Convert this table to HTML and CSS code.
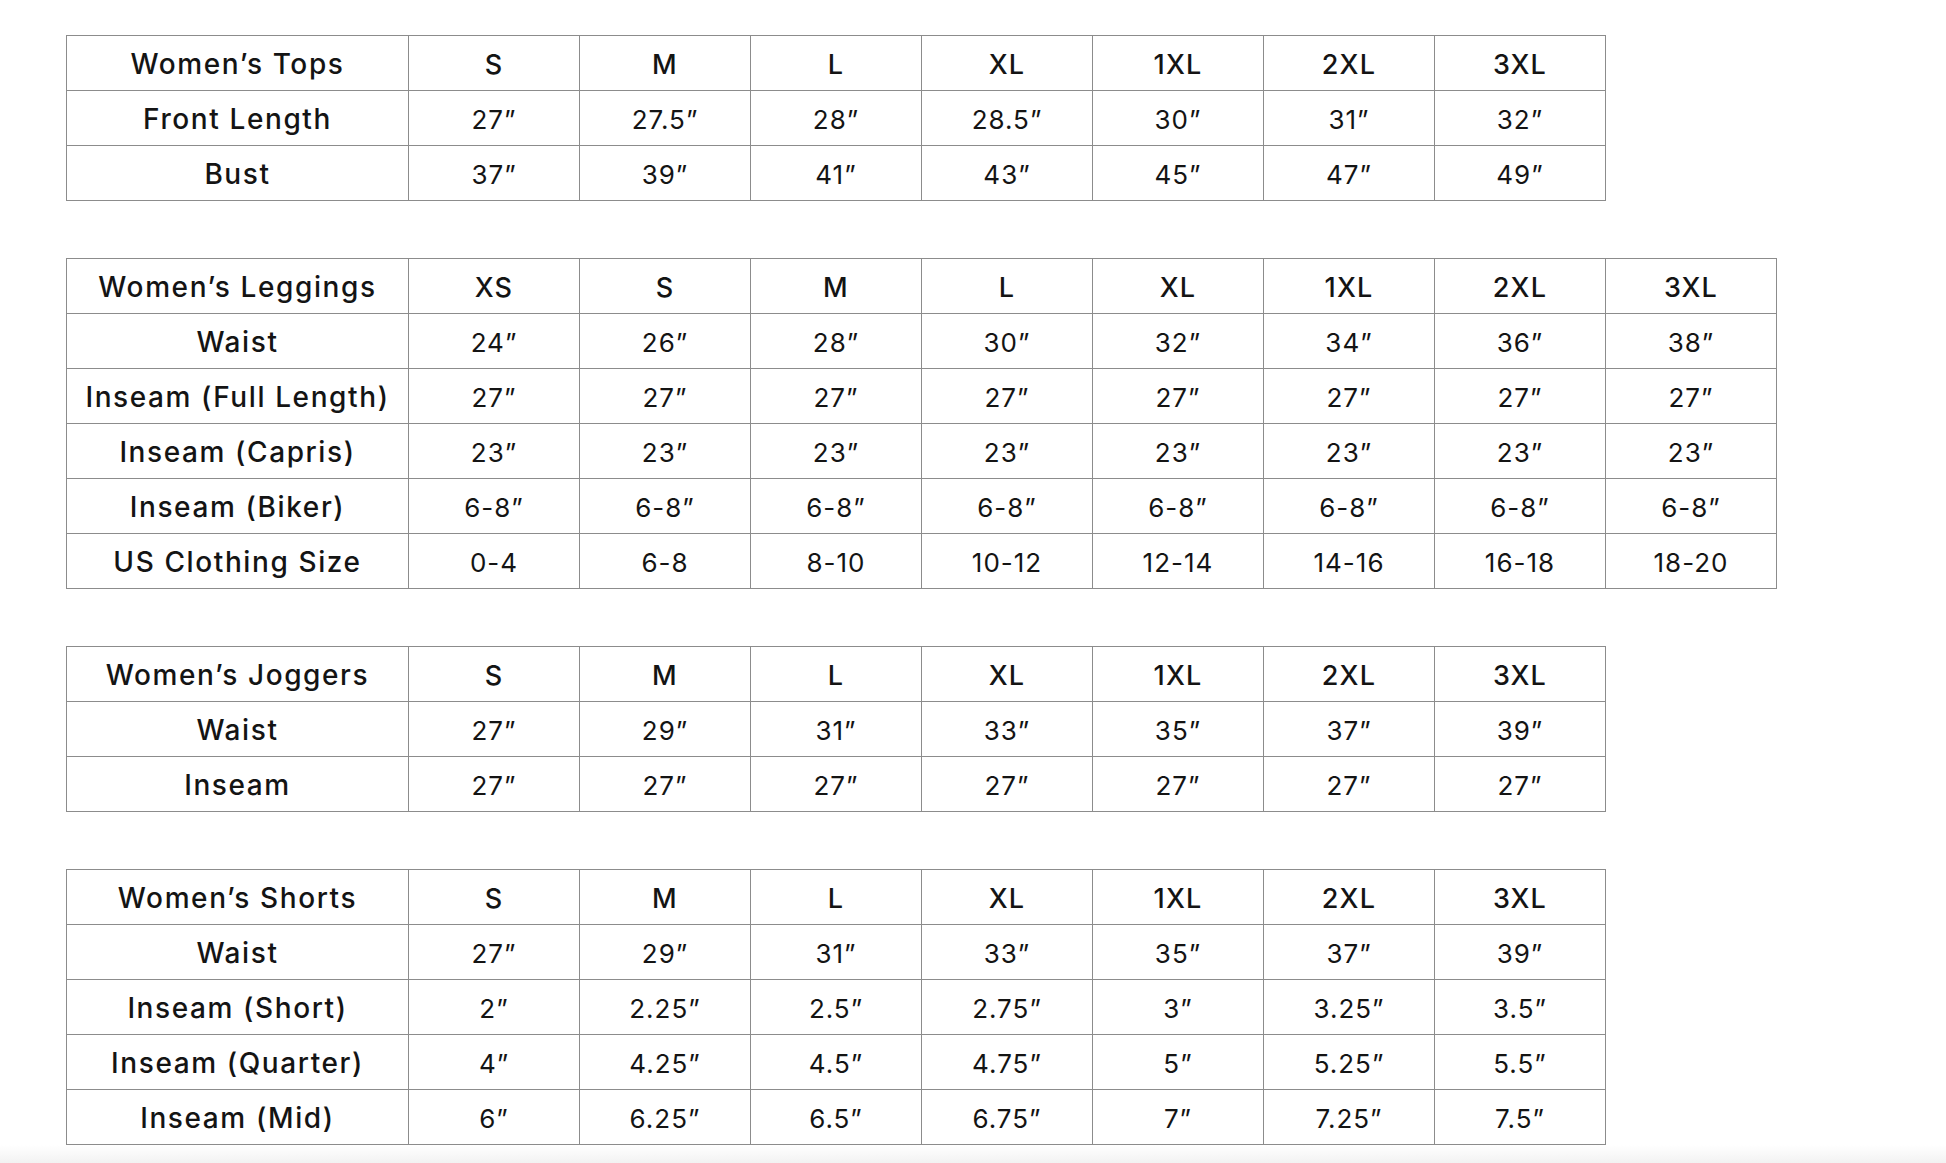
FILE: index.html
```html
<!DOCTYPE html>
<html lang="en">
<head>
<meta charset="utf-8">
<title>Women's Size Charts</title>
<link rel="stylesheet" href="styles.css">
</head>
<body>
<main class="page">
  <table class="chart">
    <colgroup><col class="c-label"><col class="c-size"><col class="c-size"><col class="c-size"><col class="c-size"><col class="c-size"><col class="c-size"><col class="c-size"></colgroup>
    <tr class="head"><th>Women&rsquo;s Tops</th><th>S</th><th>M</th><th>L</th><th>XL</th><th>1XL</th><th>2XL</th><th>3XL</th></tr>
    <tr><th>Front Length</th><td>27&rdquo;</td><td>27.5&rdquo;</td><td>28&rdquo;</td><td>28.5&rdquo;</td><td>30&rdquo;</td><td>31&rdquo;</td><td>32&rdquo;</td></tr>
    <tr><th>Bust</th><td>37&rdquo;</td><td>39&rdquo;</td><td>41&rdquo;</td><td>43&rdquo;</td><td>45&rdquo;</td><td>47&rdquo;</td><td>49&rdquo;</td></tr>
  </table>

  <table class="chart">
    <colgroup><col class="c-label"><col class="c-size"><col class="c-size"><col class="c-size"><col class="c-size"><col class="c-size"><col class="c-size"><col class="c-size"><col class="c-size"></colgroup>
    <tr class="head"><th>Women&rsquo;s Leggings</th><th>XS</th><th>S</th><th>M</th><th>L</th><th>XL</th><th>1XL</th><th>2XL</th><th>3XL</th></tr>
    <tr><th>Waist</th><td>24&rdquo;</td><td>26&rdquo;</td><td>28&rdquo;</td><td>30&rdquo;</td><td>32&rdquo;</td><td>34&rdquo;</td><td>36&rdquo;</td><td>38&rdquo;</td></tr>
    <tr><th>Inseam (Full Length)</th><td>27&rdquo;</td><td>27&rdquo;</td><td>27&rdquo;</td><td>27&rdquo;</td><td>27&rdquo;</td><td>27&rdquo;</td><td>27&rdquo;</td><td>27&rdquo;</td></tr>
    <tr><th>Inseam (Capris)</th><td>23&rdquo;</td><td>23&rdquo;</td><td>23&rdquo;</td><td>23&rdquo;</td><td>23&rdquo;</td><td>23&rdquo;</td><td>23&rdquo;</td><td>23&rdquo;</td></tr>
    <tr><th>Inseam (Biker)</th><td>6-8&rdquo;</td><td>6-8&rdquo;</td><td>6-8&rdquo;</td><td>6-8&rdquo;</td><td>6-8&rdquo;</td><td>6-8&rdquo;</td><td>6-8&rdquo;</td><td>6-8&rdquo;</td></tr>
    <tr><th>US Clothing Size</th><td>0-4</td><td>6-8</td><td>8-10</td><td>10-12</td><td>12-14</td><td>14-16</td><td>16-18</td><td>18-20</td></tr>
  </table>

  <table class="chart">
    <colgroup><col class="c-label"><col class="c-size"><col class="c-size"><col class="c-size"><col class="c-size"><col class="c-size"><col class="c-size"><col class="c-size"></colgroup>
    <tr class="head"><th>Women&rsquo;s Joggers</th><th>S</th><th>M</th><th>L</th><th>XL</th><th>1XL</th><th>2XL</th><th>3XL</th></tr>
    <tr><th>Waist</th><td>27&rdquo;</td><td>29&rdquo;</td><td>31&rdquo;</td><td>33&rdquo;</td><td>35&rdquo;</td><td>37&rdquo;</td><td>39&rdquo;</td></tr>
    <tr><th>Inseam</th><td>27&rdquo;</td><td>27&rdquo;</td><td>27&rdquo;</td><td>27&rdquo;</td><td>27&rdquo;</td><td>27&rdquo;</td><td>27&rdquo;</td></tr>
  </table>

  <table class="chart">
    <colgroup><col class="c-label"><col class="c-size"><col class="c-size"><col class="c-size"><col class="c-size"><col class="c-size"><col class="c-size"><col class="c-size"></colgroup>
    <tr class="head"><th>Women&rsquo;s Shorts</th><th>S</th><th>M</th><th>L</th><th>XL</th><th>1XL</th><th>2XL</th><th>3XL</th></tr>
    <tr><th>Waist</th><td>27&rdquo;</td><td>29&rdquo;</td><td>31&rdquo;</td><td>33&rdquo;</td><td>35&rdquo;</td><td>37&rdquo;</td><td>39&rdquo;</td></tr>
    <tr><th>Inseam (Short)</th><td>2&rdquo;</td><td>2.25&rdquo;</td><td>2.5&rdquo;</td><td>2.75&rdquo;</td><td>3&rdquo;</td><td>3.25&rdquo;</td><td>3.5&rdquo;</td></tr>
    <tr><th>Inseam (Quarter)</th><td>4&rdquo;</td><td>4.25&rdquo;</td><td>4.5&rdquo;</td><td>4.75&rdquo;</td><td>5&rdquo;</td><td>5.25&rdquo;</td><td>5.5&rdquo;</td></tr>
    <tr><th>Inseam (Mid)</th><td>6&rdquo;</td><td>6.25&rdquo;</td><td>6.5&rdquo;</td><td>6.75&rdquo;</td><td>7&rdquo;</td><td>7.25&rdquo;</td><td>7.5&rdquo;</td></tr>
  </table>
</main>
<div class="shade"></div>
</body>
</html>
```
FILE: styles.css
```css
html, body {
  margin: 0;
  padding: 0;
  background: #ffffff;
}
body {
  font-family: "Inter", "Liberation Sans", sans-serif;
  color: #141414;
  height: 1163px;
  overflow: hidden;
  position: relative;
}
.page {
  display: flex;
  flex-direction: column;
  align-items: flex-start;
  gap: 57px;
  padding: 35px 0 0 66px;
}
.chart {
  border-collapse: collapse;
  table-layout: fixed;
}
.c-label { width: 342px; }
.c-size { width: 171px; }
.chart th,
.chart td {
  border: 1.5px solid #8c8c8c;
  height: 52px;
  padding: 2px 0 0;
  text-align: center;
  vertical-align: middle;
  white-space: nowrap;
}
.chart th {
  font-size: 28px;
  font-weight: 500;
  letter-spacing: 1.6px;
}
.chart .head th + th {
  font-size: 27px;
  letter-spacing: 1.2px;
}
.chart td {
  font-size: 26px;
  font-weight: 400;
  letter-spacing: 1px;
}
.shade {
  position: absolute;
  left: 0;
  right: 0;
  bottom: 0;
  height: 18px;
  background: linear-gradient(to bottom, rgba(240,240,240,0), #f2f2f2);
}
```
